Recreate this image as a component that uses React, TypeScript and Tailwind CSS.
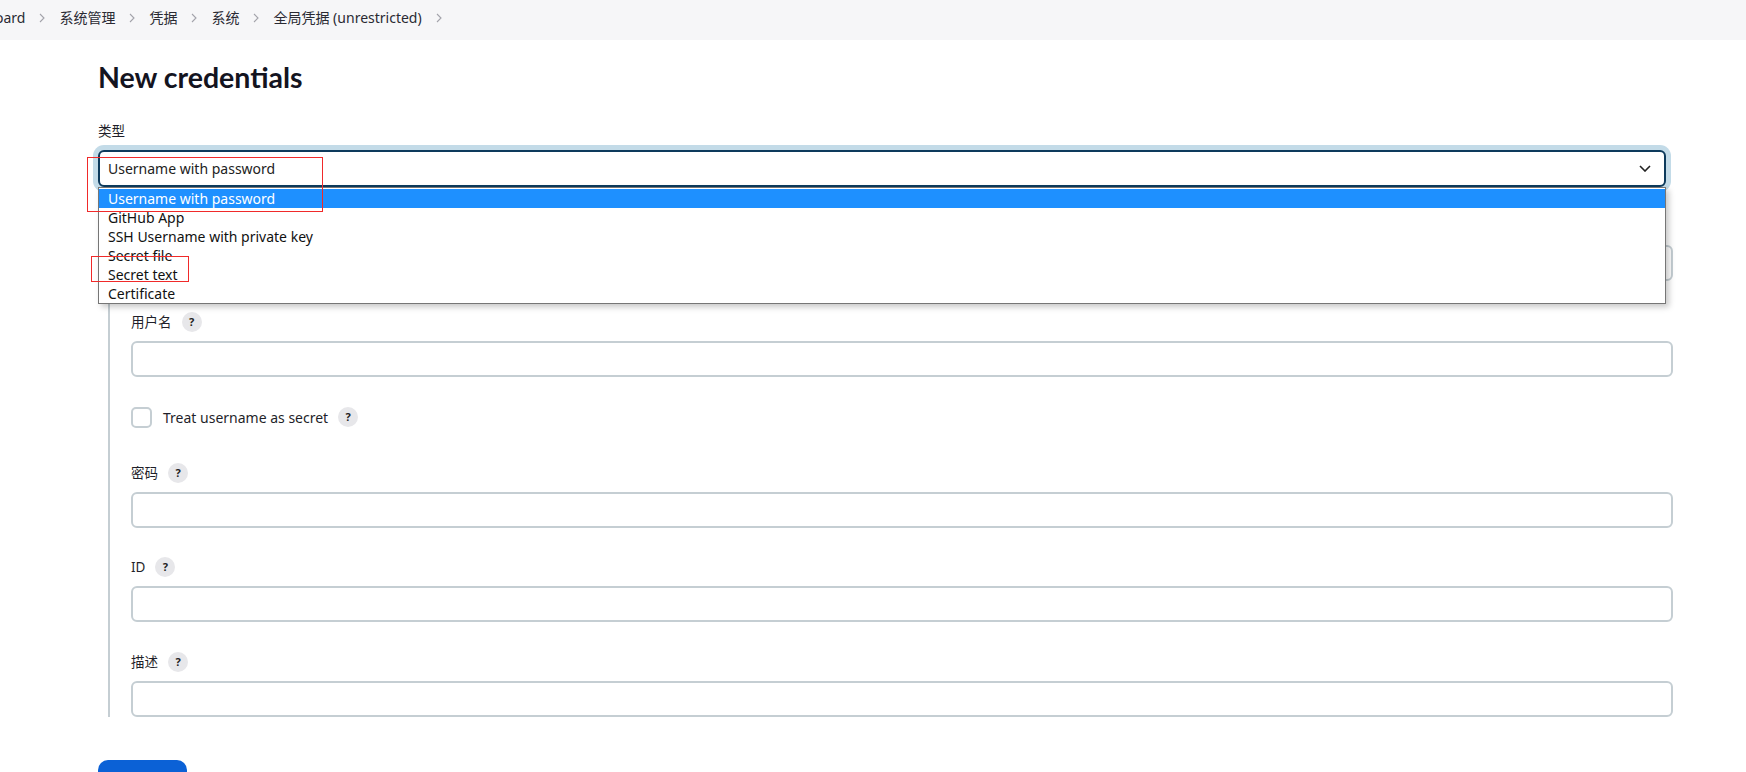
import React from 'react';

const crumbs = ['Dashboard', '系统管理', '凭据', '系统', '全局凭据 (unrestricted)'];
const kinds = [
  'Username with password',
  'GitHub App',
  'SSH Username with private key',
  'Secret file',
  'Secret text',
  'Certificate',
];

const Chevron: React.FC = () => (
  <svg width="6" height="10" viewBox="0 0 6 10" className="mx-[14px] shrink-0">
    <polyline points="1,1 5,5 1,9" fill="none" stroke="#a3a3ab" strokeWidth="1.1" />
  </svg>
);

const Help: React.FC = () => (
  <span className="inline-flex h-5 w-5 items-center justify-center rounded-full bg-[#e7e7ea] text-[11px] font-bold text-[#222]">
    ?
  </span>
);

const Label: React.FC<{ text: string; help?: boolean }> = ({ text, help = true }) => (
  <div className="flex h-5 items-center gap-2.5 text-[13.5px] text-[#1f1f2a]">
    <span>{text}</span>
    {help && <Help />}
  </div>
);

const Input: React.FC = () => (
  <div className="mt-[9px] h-9 w-full rounded-md border-2 border-[#c5ced3] bg-white" />
);

const App: React.FC = () => {
  return (
    <div className="relative min-h-screen overflow-hidden bg-white font-['Noto_Sans','Noto_Sans_CJK_SC',sans-serif]">
      {/* breadcrumb */}
      <div className="flex h-10 items-start bg-[#f6f6f8] pt-[8px]">
        <div className="-ml-[47px] flex items-center text-[14px] leading-[19px] text-[#2a2a33]">
          {crumbs.map((c) => (
            <React.Fragment key={c}>
              <span className="whitespace-nowrap">{c}</span>
              <Chevron />
            </React.Fragment>
          ))}
        </div>
      </div>

      <div className="w-[1673px] pl-[98px]">
        <h1 className="mt-5 font-['Lato','Noto_Sans',sans-serif] text-[28.5px] font-bold leading-[34px] text-[#14141f]">
          New credentials
        </h1>

        <div className="mt-[27px]">
          <Label text="类型" help={false} />
        </div>

        {/* type select, opened */}
        <div className="relative mt-[9px] w-[1568px]">
          <div className="flex h-[37px] items-center justify-between rounded-md border-2 border-[#0d3a5c] bg-white pl-2 pr-[13px] text-[14px] text-[#222] shadow-[0_0_0_5px_#c3dbe8]">
            <span>Username with password</span>
            <svg width="12" height="7" viewBox="0 0 12 7">
              <polyline points="1,1 6,6 11,1" fill="none" stroke="#222" strokeWidth="1.6" />
            </svg>
          </div>
          <ul className="absolute left-0 top-full z-20 w-full border border-[#767676] bg-white pt-px shadow-[3px_3px_6px_rgba(0,0,0,0.22)]">
            {kinds.map((k, i) => (
              <li
                key={k}
                className={`h-[19px] pl-[9px] text-[14px] leading-[19px] ${
                  i === 0 ? 'bg-[#1e90ff] text-white' : 'text-[#111]'
                }`}
              >
                {k}
              </li>
            ))}
          </ul>
        </div>

        {/* nested fields */}
        <div className="ml-[10px] mt-5 border-l-2 border-[#c5ced3] pl-[21px]">
          <Label text="范围" />
          <div className="mt-[18px] h-9 w-full rounded-md border-2 border-[#c5ced3] bg-white" />

          <div className="mt-[31px]">
            <Label text="用户名" />
            <Input />
          </div>

          <div className="mt-[29px] flex h-[22px] items-center">
            <span className="h-[21px] w-[21px] rounded-[5px] border-2 border-[#c5ced3]" />
            <span className="ml-[11px] mr-2.5 text-[14px] text-[#1f1f2a]">Treat username as secret</span>
            <Help />
          </div>

          <div className="mt-[35px]">
            <Label text="密码" />
            <Input />
          </div>

          <div className="mt-[29px]">
            <Label text="ID" />
            <Input />
          </div>

          <div className="mt-[30px]">
            <Label text="描述" />
            <Input />
          </div>
        </div>

        <button className="mt-[43px] h-[38px] w-[89px] rounded-[10px] bg-[#0b61d6] text-[14px] font-semibold text-white">
          Create
        </button>
      </div>

      {/* red annotation boxes */}
      <div className="pointer-events-none absolute left-[87px] top-[157px] z-30 h-[55px] w-[236px] border border-[#f02a2a]" />
      <div className="pointer-events-none absolute left-[91px] top-[256px] z-30 h-[26px] w-[98px] border border-[#f02a2a]" />
    </div>
  );
};

export default App;
